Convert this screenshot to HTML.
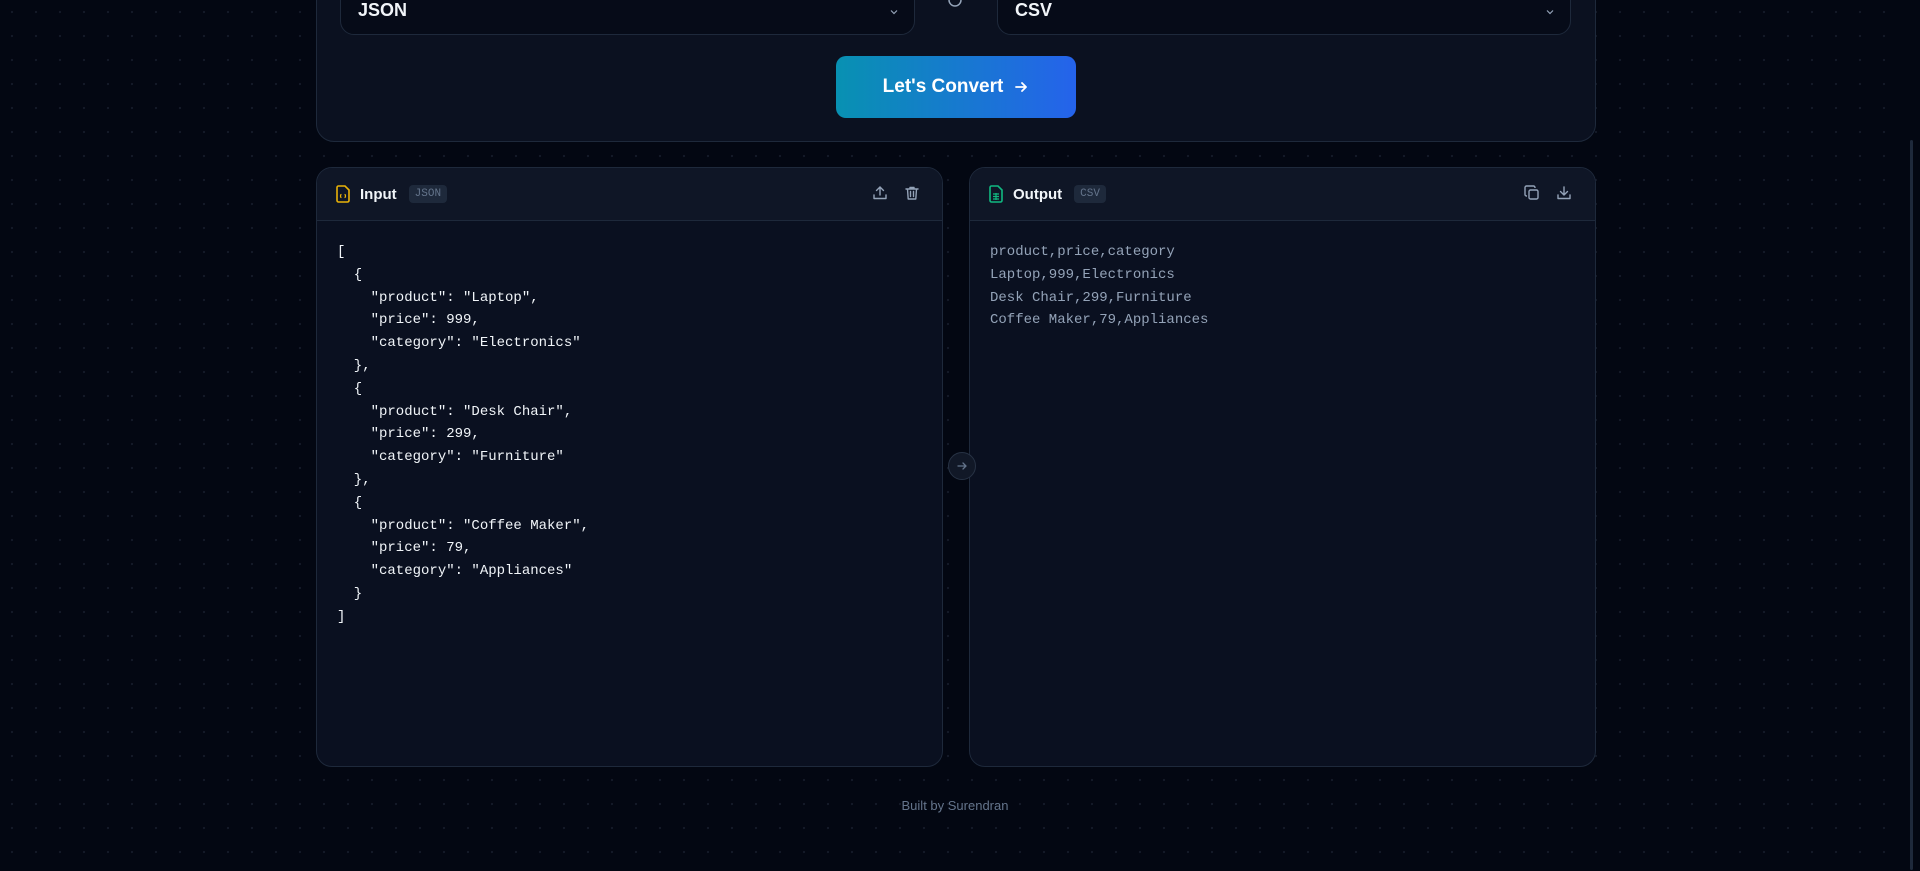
<!DOCTYPE html>
<html><head><meta charset="utf-8"><style>
*{box-sizing:border-box;margin:0;padding:0}
body{width:1920px;height:871px;overflow:hidden;background:#030712;background-image:radial-gradient(circle,#141a28 1px,transparent 1.3px);background-size:24px 24px;background-position:0 0;font-family:"Liberation Sans",sans-serif;position:relative}
.sb{position:absolute;right:0;top:0;width:15px;height:871px;background:#030712}
.sb div{position:absolute;left:5px;top:140px;width:3px;height:730px;background:#1e293b;border-radius:2px}
.top{position:absolute;left:316px;top:-40px;width:1280px;height:182px;background:#0b1120;border:1px solid #1e293b;border-radius:18px}
.sel{position:absolute;top:-30px;height:65px;background:#060b18;border:1px solid #1e293b;border-radius:14px;color:#f1f5f9;font-size:18px;font-weight:600;padding:29px 17px 0}
.sel svg{position:absolute;right:14px;top:35px}
.btn{position:absolute;left:836px;top:56px;width:240px;height:62px;border-radius:10px;background:linear-gradient(90deg,#0891b2,#2563eb);color:#fff;font-weight:700;font-size:19px;display:flex;align-items:center;justify-content:center;gap:10px}
.panel{position:absolute;top:167px;width:627px;height:600px;background:#0a1020;border:1px solid #1e293b;border-radius:16px;overflow:hidden}
.hd{height:53px;background:#0f1626;border-bottom:1px solid #1e293b;display:flex;align-items:center;padding:0 18px;position:relative}
.hd .t{color:#f1f5f9;font-weight:700;font-size:15px;margin-left:9px}
.bd{font-family:"Liberation Mono",monospace;font-size:11px;color:#64748b;background:#1e293b;border-radius:4px;padding:3px 6px;margin-left:12px}
.ic{position:absolute;top:17px}
pre{font-family:"Liberation Mono",monospace;font-size:14px;line-height:22.8px;padding:20px 20px}
.foot{position:absolute;top:798px;left:0;width:1910px;text-align:center;color:#64748b;font-size:13px}
.mid{position:absolute;left:948px;top:452px;width:28px;height:28px;border-radius:50%;background:#111827;border:1px solid #273244;display:flex;align-items:center;justify-content:center;z-index:5}
</style></head><body>
<div class="top"></div>
<div class="sel" style="left:340px;width:575px">JSON<svg width="12" height="12" viewBox="0 0 12 12"><path d="M3 4.5l3 3 3-3" stroke="#94a3b8" fill="none" stroke-width="1.2"/></svg></div>
<div class="sel" style="left:997px;width:574px">CSV<svg width="12" height="12" viewBox="0 0 12 12"><path d="M3 4.5l3 3 3-3" stroke="#94a3b8" fill="none" stroke-width="1.2"/></svg></div>
<svg style="position:absolute;left:947px;top:0;z-index:3" width="16" height="10"><circle cx="8" cy="0" r="6" stroke="#94a3b8" stroke-width="1.5" fill="none"/></svg>
<div class="btn">Let's Convert <svg width="16" height="16" viewBox="0 0 16 16"><path d="M3 8h10M9 4l4 4-4 4" stroke="#fff" stroke-width="1.8" fill="none" stroke-linecap="round" stroke-linejoin="round"/></svg></div>

<div class="panel" style="left:316px">
<div class="hd"><svg width="16" height="18" viewBox="0 0 16 18"><path d="M2 2.5a1.5 1.5 0 0 1 1.5-1.5H10l4 4v10.5a1.5 1.5 0 0 1-1.5 1.5h-9A1.5 1.5 0 0 1 2 15.5z" stroke="#eab308" stroke-width="1.6" fill="none"/><path d="M6.5 9.5q-1 0-1 1.5t1 1.5M9.5 9.5q1 0 1 1.5t-1 1.5" stroke="#eab308" stroke-width="1.2" fill="none"/></svg><span class="t">Input</span><span class="bd">JSON</span>
<svg class="ic" style="left:555px" width="16" height="16" viewBox="0 0 16 16"><path d="M8 10V2M4.5 5.5 8 2l3.5 3.5M2 10v3.5h12V10" stroke="#94a3b8" stroke-width="1.4" fill="none" stroke-linecap="round" stroke-linejoin="round"/></svg>
<svg class="ic" style="left:587px" width="16" height="16" viewBox="0 0 16 16"><path d="M2 4h12M6 4V2.5h4V4M3.5 4l.7 10h7.6l.7-10M6.5 6.5v5M9.5 6.5v5" stroke="#94a3b8" stroke-width="1.4" fill="none" stroke-linecap="round" stroke-linejoin="round"/></svg></div>
<pre style="color:#f1f5f9">[
  {
    "product": "Laptop",
    "price": 999,
    "category": "Electronics"
  },
  {
    "product": "Desk Chair",
    "price": 299,
    "category": "Furniture"
  },
  {
    "product": "Coffee Maker",
    "price": 79,
    "category": "Appliances"
  }
]</pre></div>

<div class="mid"><svg width="12" height="12" viewBox="0 0 12 12"><path d="M2 6h8M7 3l3 3-3 3" stroke="#64748b" stroke-width="1.3" fill="none" stroke-linecap="round"/></svg></div>

<div class="panel" style="left:969px">
<div class="hd"><svg width="16" height="18" viewBox="0 0 16 18"><path d="M2 2.5a1.5 1.5 0 0 1 1.5-1.5H10l4 4v10.5a1.5 1.5 0 0 1-1.5 1.5h-9A1.5 1.5 0 0 1 2 15.5z" stroke="#10b981" stroke-width="1.6" fill="none"/><path d="M5 9h6M5 11.5h6M5 14h6M8 8v7" stroke="#10b981" stroke-width="1.2" fill="none"/></svg><span class="t">Output</span><span class="bd">CSV</span>
<svg class="ic" style="left:554px" width="16" height="16" viewBox="0 0 16 16"><rect x="5" y="5" width="9" height="9" rx="1.5" stroke="#94a3b8" stroke-width="1.4" fill="none"/><path d="M11 3V2.5A1.5 1.5 0 0 0 9.5 1h-7A1.5 1.5 0 0 0 1 2.5v7A1.5 1.5 0 0 0 2.5 11H3" stroke="#94a3b8" stroke-width="1.4" fill="none"/></svg>
<svg class="ic" style="left:586px" width="16" height="16" viewBox="0 0 16 16"><path d="M8 2v8M4.5 6.5 8 10l3.5-3.5M2 10v3.5h12V10" stroke="#94a3b8" stroke-width="1.4" fill="none" stroke-linecap="round" stroke-linejoin="round"/></svg></div>
<pre style="color:#94a3b8">product,price,category
Laptop,999,Electronics
Desk Chair,299,Furniture
Coffee Maker,79,Appliances</pre></div>

<div class="foot">Built by Surendran</div>
<div class="sb"><div></div></div>
</body></html>
